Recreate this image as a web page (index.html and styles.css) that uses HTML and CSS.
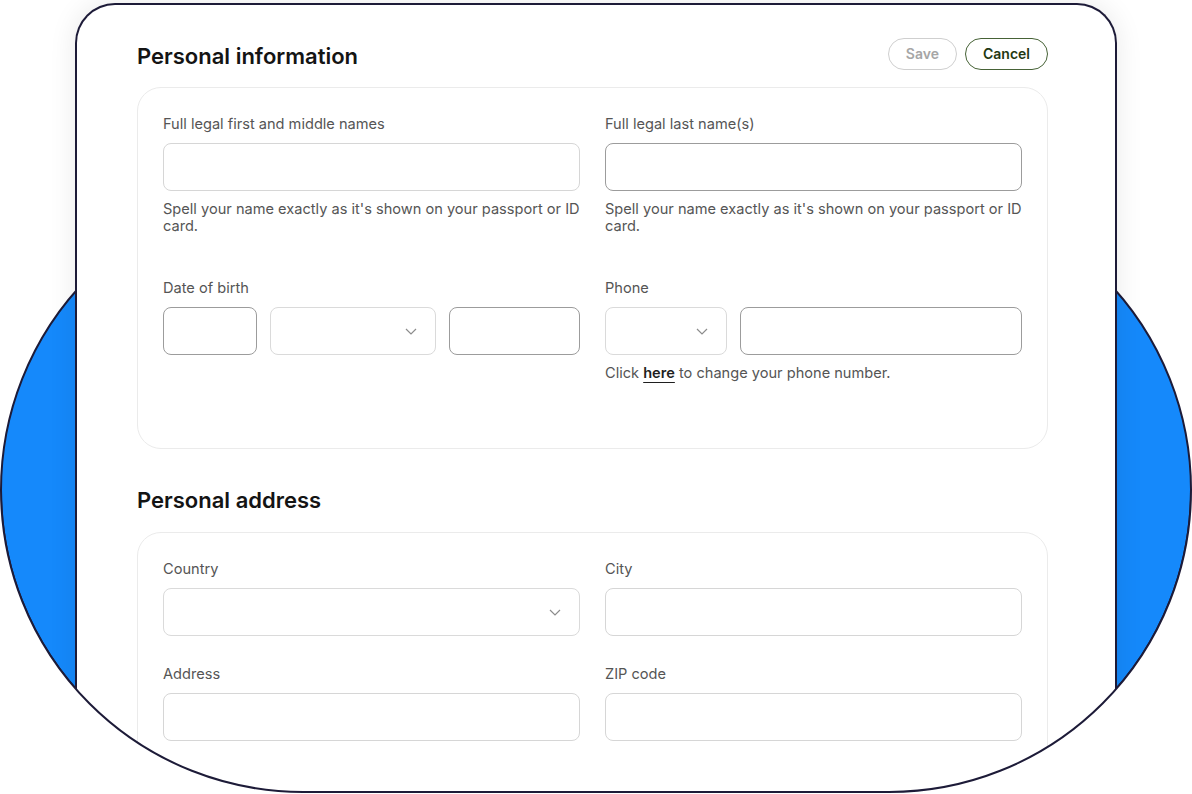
FILE: index.html
```html
<!DOCTYPE html>
<html lang="en">
<head>
<meta charset="utf-8">
<title>Personal information</title>
<link rel="stylesheet" href="styles.css">
</head>
<body>
<div class="stage">
  <svg class="blob" width="1192" height="794" viewBox="0 0 1192 794" aria-hidden="true">
    <rect x="1" y="188" width="1190" height="604" rx="302" ry="302" fill="#1589fb" stroke="#1d1b38" stroke-width="2"/>
  </svg>

  <main class="card">
    <div class="head-row">
      <h1 class="title">Personal information</h1>
      <div class="actions">
        <button class="btn btn-save" type="button">Save</button>
        <button class="btn btn-cancel" type="button">Cancel</button>
      </div>
    </div>

    <section class="panel panel-info">
      <div class="field">
        <label class="label">Full legal first and middle names</label>
        <div class="box"></div>
        <p class="help">Spell your name exactly as it's shown on your passport or ID card.</p>
      </div>
      <div class="field">
        <label class="label">Full legal last name(s)</label>
        <div class="box box-dark"></div>
        <p class="help">Spell your name exactly as it's shown on your passport or ID card.</p>
      </div>
      <div class="field">
        <label class="label">Date of birth</label>
        <div class="split">
          <div class="box box-dark day"></div>
          <div class="box select month">
            <svg class="chev" width="12" height="7" viewBox="0 0 12 7"><polyline points="1,1 6,6 11,1" fill="none" stroke="#8c8c8c" stroke-width="1.2"/></svg>
          </div>
          <div class="box box-dark grow"></div>
        </div>
      </div>
      <div class="field">
        <label class="label">Phone</label>
        <div class="split">
          <div class="box select code">
            <svg class="chev" width="12" height="7" viewBox="0 0 12 7"><polyline points="1,1 6,6 11,1" fill="none" stroke="#8c8c8c" stroke-width="1.2"/></svg>
          </div>
          <div class="box box-dark grow"></div>
        </div>
        <p class="help">Click <a class="link" href="#">here</a> to change your phone number.</p>
      </div>
    </section>

    <h2 class="title title-2">Personal address</h2>

    <section class="panel panel-address">
      <div class="field">
        <label class="label">Country</label>
        <div class="box select">
          <svg class="chev" width="12" height="7" viewBox="0 0 12 7"><polyline points="1,1 6,6 11,1" fill="none" stroke="#8c8c8c" stroke-width="1.2"/></svg>
        </div>
      </div>
      <div class="field">
        <label class="label">City</label>
        <div class="box"></div>
      </div>
      <div class="field">
        <label class="label">Address</label>
        <div class="box"></div>
      </div>
      <div class="field">
        <label class="label">ZIP code</label>
        <div class="box"></div>
      </div>
    </section>
  </main>

  <svg class="mask" width="1192" height="794" viewBox="0 0 1192 794" aria-hidden="true">
    <path d="M0,490 L0,794 L1192,794 L1192,490 L1191,490 A302,302 0 0 1 889,792 L303,792 A302,302 0 0 1 1,490 Z" fill="#ffffff"/>
    <path d="M1,490 A302,302 0 0 0 303,792 L889,792 A302,302 0 0 0 1191,490" fill="none" stroke="#1d1b38" stroke-width="2"/>
  </svg>
</div>
</body>
</html>
```

FILE: styles.css
```css
* { box-sizing: border-box; }

html, body {
  margin: 0;
  padding: 0;
  background: #ffffff;
}

body {
  font-family: Inter, "Noto Sans", "Liberation Sans", sans-serif;
  color: #161616;
}

.stage {
  position: relative;
  width: 1192px;
  height: 794px;
  overflow: hidden;
  padding-top: 3px;
  padding-left: 75px;
}

.blob {
  position: absolute;
  left: 0;
  top: 0;
  z-index: 0;
}

.mask {
  position: absolute;
  left: 0;
  top: 0;
  z-index: 2;
  pointer-events: none;
}

.card {
  position: relative;
  z-index: 1;
  width: 1042px;
  height: 840px;
  background: #ffffff;
  border: 2px solid #1d1b38;
  border-bottom: none;
  border-radius: 40px 40px 0 0;
  box-shadow: 0 0 28px rgba(0, 0, 0, 0.09);
  padding: 33px 67px 0 60px;
}

.head-row {
  display: flex;
  align-items: center;
  justify-content: space-between;
  height: 32px;
  margin-bottom: 17px;
}

.title {
  margin: 0;
  font-size: 22px;
  line-height: 28px;
  font-weight: 600;
  color: #141414;
  padding-top: 3px;
}

.title-2 {
  margin: 37px 0 18px;
  padding-top: 0;
}

.actions {
  display: flex;
  gap: 8px;
}

.btn {
  height: 32px;
  padding: 0 17px;
  border-radius: 16px;
  background: #ffffff;
  font-family: Inter, "Noto Sans", "Liberation Sans", sans-serif;
  font-size: 14px;
  font-weight: 600;
  line-height: 30px;
  cursor: pointer;
}

.btn-save {
  border: 1px solid #cfcfcf;
  color: #a6a6a6;
}

.btn-cancel {
  border: 1px solid #466236;
  color: #1f3812;
}

.panel {
  display: grid;
  grid-template-columns: 1fr 1fr;
  column-gap: 25px;
  border: 1px solid #ebebeb;
  border-radius: 24px;
  padding: 26px 25px 66px;
}

.panel-info {
  row-gap: 43px;
}

.panel-address {
  row-gap: 28px;
  padding-bottom: 90px;
}

.field {
  display: flex;
  flex-direction: column;
  min-width: 0;
}

.label {
  display: block;
  font-size: 14.6px;
  line-height: 20px;
  color: #555555;
  margin-bottom: 9px;
}

.box {
  position: relative;
  height: 48px;
  border: 1px solid #d6d6d6;
  border-radius: 8px;
  background: #ffffff;
}

.box-dark {
  border-color: #9c9c9c;
}

.select {
  display: flex;
  align-items: center;
  justify-content: flex-end;
  padding-right: 18px;
  border-color: #dadada;
}

.chev {
  display: block;
}

.split {
  display: flex;
  gap: 13px;
}

.day { width: 94px; flex: none; }
.month { width: 166px; flex: none; }
.code { width: 122px; flex: none; }
.grow { flex: 1; }

.help {
  margin: 10px 0 0;
  font-size: 14.6px;
  line-height: 17px;
  color: #555555;
}

.link {
  color: #1f1f1f;
  font-weight: 600;
  text-decoration: underline;
  text-decoration-thickness: 1px;
  text-underline-offset: 4px;
}
```
